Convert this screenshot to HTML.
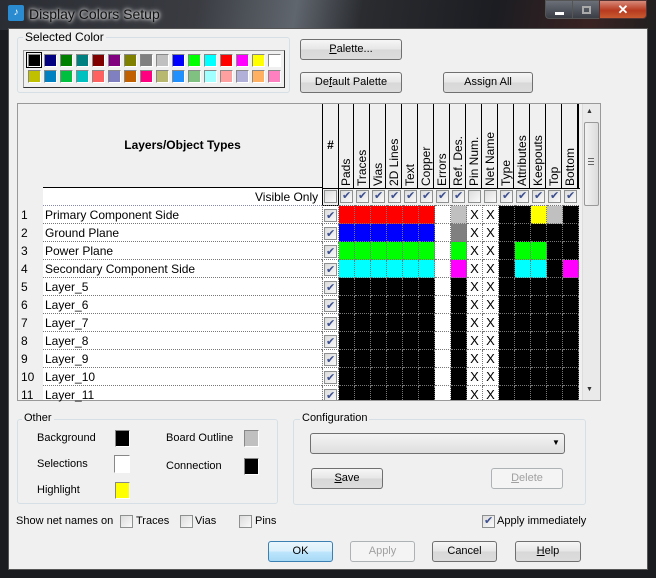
<!DOCTYPE html>
<html><head><meta charset="utf-8"><style>
*{box-sizing:border-box;margin:0;padding:0}
body{width:656px;height:578px;overflow:hidden;background:#1a1c20;font-family:"Liberation Sans",sans-serif;font-size:12px;color:#000;position:relative}
.a{position:absolute}
#tb{left:0;top:0;width:656px;height:30px;background:linear-gradient(100deg,#2a2d33 0%,#3a3c42 30%,#60666e 45%,#2a2c30 55%,#1b1d22 75%,#3a2222 90%,#202020 100%)}
#client{left:8px;top:28px;width:640px;height:542px;background:#f0f0f0;border:1px solid #555}
.btn{position:absolute;height:21px;border:1px solid #707070;border-radius:3px;background:linear-gradient(#f6f6f6,#e6e6e6 50%,#d8d8d8 51%,#dcdcdc);text-align:center;line-height:19px;font-size:11px}
.grp{position:absolute;border:1px solid #d5dfe5;border-radius:3px}
.lg{position:absolute;background:#f0f0f0;padding:0 2px;font-size:11px}
.sw{position:absolute;width:13px;height:13px;border:1px solid #888;border-right-color:#fff;border-bottom-color:#fff}
.cb{position:absolute;width:13px;height:13px;border:1px solid #8e8f8f;background:linear-gradient(135deg,#dcdcdc,#fafafa);}
.ck::after{content:"✔";position:absolute;left:1px;top:-2px;font-size:11px;color:#3c4f8e}
table{border-collapse:collapse;position:absolute}
td{border:1px dotted #777;width:16px;height:18px;padding:0;text-align:center;font-size:13px;line-height:16px}
.r{background:#f00}.b{background:#00f}.g{background:#0f0}.c{background:#0ff}.m{background:#f0f}.k{background:#000}.w{background:#fff}.y{background:#ff0}.s{background:#c0c0c0}.d{background:#808080}.x{background:#fff}
.vh{position:absolute;top:104px;width:16px;height:84px;border-left:1px solid #000;writing-mode:vertical-rl;transform:rotate(180deg);font-size:12px;padding-top:2px;line-height:16px}
.lab{position:absolute;left:45px;font-size:12px}
.num{position:absolute;left:21px;font-size:12px}
.sm{font-size:11px}
</style></head><body>
<div id="tb" class="a"></div>
<div class="a" style="left:8px;top:5px;width:16px;height:16px;background:#2a8bd0;border-radius:2px;color:#fff;font-size:10px;line-height:16px;text-align:center">♪</div>
<div class="a" style="left:29px;top:6px;color:#111;font-size:14px;text-shadow:0 0 6px #fff,0 0 3px #fff">Display Colors Setup</div>
<div class="a" style="left:545px;top:0;width:28px;height:19px;border:1px solid #555;border-radius:0 0 0 4px;background:linear-gradient(#6a6f78,#3a3d44)"><div class="a" style="left:9px;top:11px;width:9px;height:3px;background:#fff"></div></div>
<div class="a" style="left:572px;top:0;width:28px;height:19px;border:1px solid #555;background:linear-gradient(#6a6f78,#3a3d44)"><div class="a" style="left:9px;top:5px;width:9px;height:8px;border:2px solid #aaa"></div></div>
<div class="a" style="left:599px;top:0;width:48px;height:19px;border:1px solid #533;border-radius:0 0 4px 0;background:linear-gradient(#d88a7a,#b83a20 55%,#c85a30);color:#fff;text-align:center;font-weight:bold;font-size:13px;line-height:18px">✕</div>

<div id="client" class="a"></div>

<div class="grp" style="left:17px;top:37px;width:273px;height:56px"></div>
<div class="lg" style="left:23px;top:30px;font-size:12px">Selected Color</div>
<div class="a" style="left:23px;top:50px;width:262px;height:38px;border:1px solid #999;border-right-color:#333;border-bottom-color:#333;background:#f0f0f0"></div>
<div class="a" style="left:26px;top:52px;width:16px;height:16px;border:1px solid #000"></div>
<div class="sw" style="left:28px;top:54px;background:#000"></div><div class="sw" style="left:44px;top:54px;background:#000080"></div><div class="sw" style="left:60px;top:54px;background:#008000"></div><div class="sw" style="left:76px;top:54px;background:#008080"></div><div class="sw" style="left:92px;top:54px;background:#800000"></div><div class="sw" style="left:108px;top:54px;background:#800080"></div><div class="sw" style="left:124px;top:54px;background:#808000"></div><div class="sw" style="left:140px;top:54px;background:#808080"></div><div class="sw" style="left:156px;top:54px;background:#c0c0c0"></div><div class="sw" style="left:172px;top:54px;background:#0000ff"></div><div class="sw" style="left:188px;top:54px;background:#00ff00"></div><div class="sw" style="left:204px;top:54px;background:#00ffff"></div><div class="sw" style="left:220px;top:54px;background:#ff0000"></div><div class="sw" style="left:236px;top:54px;background:#ff00ff"></div><div class="sw" style="left:252px;top:54px;background:#ffff00"></div><div class="sw" style="left:268px;top:54px;background:#ffffff"></div>
<div class="sw" style="left:28px;top:70px;background:#c0c000"></div><div class="sw" style="left:44px;top:70px;background:#0080c0"></div><div class="sw" style="left:60px;top:70px;background:#00c040"></div><div class="sw" style="left:76px;top:70px;background:#00c0c0"></div><div class="sw" style="left:92px;top:70px;background:#ff6060"></div><div class="sw" style="left:108px;top:70px;background:#8080c0"></div><div class="sw" style="left:124px;top:70px;background:#c06000"></div><div class="sw" style="left:140px;top:70px;background:#ff0080"></div><div class="sw" style="left:156px;top:70px;background:#b8b870"></div><div class="sw" style="left:172px;top:70px;background:#2090ff"></div><div class="sw" style="left:188px;top:70px;background:#80c080"></div><div class="sw" style="left:204px;top:70px;background:#a0ffff"></div><div class="sw" style="left:220px;top:70px;background:#ffa0a0"></div><div class="sw" style="left:236px;top:70px;background:#b0b0d8"></div><div class="sw" style="left:252px;top:70px;background:#ffb060"></div><div class="sw" style="left:268px;top:70px;background:#ff80c0"></div>

<div class="btn" style="left:300px;top:39px;width:102px"><u>P</u>alette...</div>
<div class="btn" style="left:300px;top:72px;width:102px">De<u>f</u>ault Palette</div>
<div class="btn" style="left:443px;top:72px;width:90px">Assign All</div>

<div class="a" style="left:17px;top:103px;width:584px;height:298px;border:1px solid #999;background:#f0f0f0"></div>
<div class="a" style="left:43px;top:104px;width:279px;height:84px;border-bottom:1px solid #000"></div>
<div class="a" style="left:43px;top:138px;width:279px;text-align:center;font-weight:bold">Layers/Object Types</div>
<div class="a" style="left:43px;top:188px;width:279px;height:212px;background:#fff"></div>
<div class="a" style="left:322px;top:104px;width:17px;height:102px;border-left:1px solid #000;border-right:1px solid #000"></div>
<div class="a" style="left:322px;top:138px;width:17px;text-align:center;font-weight:bold">#</div>
<div class="a" style="left:338px;top:188px;width:242px;height:1px;background:#000"></div>
<div class="a" style="left:43px;top:205px;width:279px;border-top:1px dotted #88a"></div>
<div class="a" style="left:255px;top:190px">Visible Only</div>
<div class="a" style="left:322px;top:188px;width:17px;height:18px;border:1px solid #000"></div>
<div class="cb" style="left:324px;top:190px"></div>

<div class="vh" style="left:338px">Pads</div><div class="vh" style="left:354px">Traces</div><div class="vh" style="left:370px">Vias</div><div class="vh" style="left:386px">2D Lines</div><div class="vh" style="left:402px">Text</div><div class="vh" style="left:418px">Copper</div><div class="vh" style="left:434px">Errors</div><div class="vh" style="left:450px">Ref. Des.</div><div class="vh" style="left:466px">Pin Num.</div><div class="vh" style="left:482px">Net Name</div><div class="vh" style="left:498px">Type</div><div class="vh" style="left:514px">Attributes</div><div class="vh" style="left:530px">Keepouts</div><div class="vh" style="left:546px">Top</div><div class="vh" style="left:562px">Bottom</div>
<div class="a" style="left:578px;top:104px;width:1px;height:84px;background:#000"></div>

<div class="cb ck" style="left:340px;top:190px"></div><div class="cb ck" style="left:356px;top:190px"></div><div class="cb ck" style="left:372px;top:190px"></div><div class="cb ck" style="left:388px;top:190px"></div><div class="cb ck" style="left:404px;top:190px"></div><div class="cb ck" style="left:420px;top:190px"></div><div class="cb ck" style="left:436px;top:190px"></div><div class="cb ck" style="left:452px;top:190px"></div><div class="cb" style="left:468px;top:190px"></div><div class="cb" style="left:484px;top:190px"></div><div class="cb ck" style="left:500px;top:190px"></div><div class="cb ck" style="left:516px;top:190px"></div><div class="cb ck" style="left:532px;top:190px"></div><div class="cb ck" style="left:548px;top:190px"></div><div class="cb ck" style="left:564px;top:190px"></div>

<div class="num" style="top:208px">1</div><div class="lab" style="top:208px">Primary Component Side</div>
<div class="num" style="top:226px">2</div><div class="lab" style="top:226px">Ground Plane</div>
<div class="num" style="top:244px">3</div><div class="lab" style="top:244px">Power Plane</div>
<div class="num" style="top:262px">4</div><div class="lab" style="top:262px">Secondary Component Side</div>
<div class="num" style="top:280px">5</div><div class="lab" style="top:280px">Layer_5</div>
<div class="num" style="top:298px">6</div><div class="lab" style="top:298px">Layer_6</div>
<div class="num" style="top:316px">7</div><div class="lab" style="top:316px">Layer_7</div>
<div class="num" style="top:334px">8</div><div class="lab" style="top:334px">Layer_8</div>
<div class="num" style="top:352px">9</div><div class="lab" style="top:352px">Layer_9</div>
<div class="num" style="top:370px">10</div><div class="lab" style="top:370px">Layer_10</div>
<div class="num" style="top:388px">11</div><div class="lab" style="top:388px">Layer_11</div>
<div class="a" style="left:43px;top:223px;width:279px;border-top:1px dotted #777"></div>
<div class="a" style="left:43px;top:241px;width:279px;border-top:1px dotted #777"></div>
<div class="a" style="left:43px;top:259px;width:279px;border-top:1px dotted #777"></div>
<div class="a" style="left:43px;top:277px;width:279px;border-top:1px dotted #777"></div>
<div class="a" style="left:43px;top:295px;width:279px;border-top:1px dotted #777"></div>
<div class="a" style="left:43px;top:313px;width:279px;border-top:1px dotted #777"></div>
<div class="a" style="left:43px;top:331px;width:279px;border-top:1px dotted #777"></div>
<div class="a" style="left:43px;top:349px;width:279px;border-top:1px dotted #777"></div>
<div class="a" style="left:43px;top:367px;width:279px;border-top:1px dotted #777"></div>
<div class="a" style="left:43px;top:385px;width:279px;border-top:1px dotted #777"></div>

<div class="a" style="left:322px;top:205px;width:258px;height:195px;overflow:hidden">
<table style="left:0;top:0">
<tr><td class="w"><div class="cb ck" style="position:relative;margin:1px auto 0"></div></td><td class="r"></td><td class="r"></td><td class="r"></td><td class="r"></td><td class="r"></td><td class="r"></td><td class="w"></td><td class="s"></td><td class="x">X</td><td class="x">X</td><td class="k"></td><td class="k"></td><td class="y"></td><td class="s"></td><td class="k"></td></tr>
<tr><td class="w"><div class="cb ck" style="position:relative;margin:1px auto 0"></div></td><td class="b"></td><td class="b"></td><td class="b"></td><td class="b"></td><td class="b"></td><td class="b"></td><td class="w"></td><td class="d"></td><td class="x">X</td><td class="x">X</td><td class="k"></td><td class="k"></td><td class="k"></td><td class="k"></td><td class="k"></td></tr>
<tr><td class="w"><div class="cb ck" style="position:relative;margin:1px auto 0"></div></td><td class="g"></td><td class="g"></td><td class="g"></td><td class="g"></td><td class="g"></td><td class="g"></td><td class="w"></td><td class="g"></td><td class="x">X</td><td class="x">X</td><td class="k"></td><td class="g"></td><td class="g"></td><td class="k"></td><td class="k"></td></tr>
<tr><td class="w"><div class="cb ck" style="position:relative;margin:1px auto 0"></div></td><td class="c"></td><td class="c"></td><td class="c"></td><td class="c"></td><td class="c"></td><td class="c"></td><td class="w"></td><td class="m"></td><td class="x">X</td><td class="x">X</td><td class="k"></td><td class="c"></td><td class="c"></td><td class="k"></td><td class="m"></td></tr>
<tr><td class="w"><div class="cb ck" style="position:relative;margin:1px auto 0"></div></td><td class="k"></td><td class="k"></td><td class="k"></td><td class="k"></td><td class="k"></td><td class="k"></td><td class="w"></td><td class="k"></td><td class="x">X</td><td class="x">X</td><td class="k"></td><td class="k"></td><td class="k"></td><td class="k"></td><td class="k"></td></tr>
<tr><td class="w"><div class="cb ck" style="position:relative;margin:1px auto 0"></div></td><td class="k"></td><td class="k"></td><td class="k"></td><td class="k"></td><td class="k"></td><td class="k"></td><td class="w"></td><td class="k"></td><td class="x">X</td><td class="x">X</td><td class="k"></td><td class="k"></td><td class="k"></td><td class="k"></td><td class="k"></td></tr>
<tr><td class="w"><div class="cb ck" style="position:relative;margin:1px auto 0"></div></td><td class="k"></td><td class="k"></td><td class="k"></td><td class="k"></td><td class="k"></td><td class="k"></td><td class="w"></td><td class="k"></td><td class="x">X</td><td class="x">X</td><td class="k"></td><td class="k"></td><td class="k"></td><td class="k"></td><td class="k"></td></tr>
<tr><td class="w"><div class="cb ck" style="position:relative;margin:1px auto 0"></div></td><td class="k"></td><td class="k"></td><td class="k"></td><td class="k"></td><td class="k"></td><td class="k"></td><td class="w"></td><td class="k"></td><td class="x">X</td><td class="x">X</td><td class="k"></td><td class="k"></td><td class="k"></td><td class="k"></td><td class="k"></td></tr>
<tr><td class="w"><div class="cb ck" style="position:relative;margin:1px auto 0"></div></td><td class="k"></td><td class="k"></td><td class="k"></td><td class="k"></td><td class="k"></td><td class="k"></td><td class="w"></td><td class="k"></td><td class="x">X</td><td class="x">X</td><td class="k"></td><td class="k"></td><td class="k"></td><td class="k"></td><td class="k"></td></tr>
<tr><td class="w"><div class="cb ck" style="position:relative;margin:1px auto 0"></div></td><td class="k"></td><td class="k"></td><td class="k"></td><td class="k"></td><td class="k"></td><td class="k"></td><td class="w"></td><td class="k"></td><td class="x">X</td><td class="x">X</td><td class="k"></td><td class="k"></td><td class="k"></td><td class="k"></td><td class="k"></td></tr>
<tr><td class="w"><div class="cb ck" style="position:relative;margin:1px auto 0"></div></td><td class="k"></td><td class="k"></td><td class="k"></td><td class="k"></td><td class="k"></td><td class="k"></td><td class="w"></td><td class="k"></td><td class="x">X</td><td class="x">X</td><td class="k"></td><td class="k"></td><td class="k"></td><td class="k"></td><td class="k"></td></tr>
</table></div>

<div class="a" style="left:582px;top:104px;width:18px;height:296px;background:#eaeaea;border-left:1px solid #ddd"></div>
<div class="a" style="left:586px;top:108px;font-size:7px;color:#333">▲</div>
<div class="a" style="left:584px;top:122px;width:15px;height:84px;border:1px solid #999;border-radius:2px;background:linear-gradient(90deg,#f2f2f2,#dcdcdc)"></div>
<div class="a" style="left:588px;top:158px;width:6px;height:7px;border-top:1px solid #666;border-bottom:1px solid #666"><div style="margin-top:2px;height:1px;background:#666"></div></div>
<div class="a" style="left:586px;top:386px;font-size:7px;color:#333">▼</div>

<div class="grp" style="left:17px;top:419px;width:261px;height:85px"></div>
<div class="lg" style="left:22px;top:412px">Other</div>
<div class="a sm" style="left:37px;top:432px">Background</div>
<div class="sw" style="left:115px;top:430px;width:15px;height:17px;background:#000"></div>
<div class="a sm" style="left:37px;top:458px">Selections</div>
<div class="sw" style="left:114px;top:455px;width:16px;height:18px;background:#fff"></div>
<div class="a sm" style="left:37px;top:484px">Highlight</div>
<div class="sw" style="left:115px;top:482px;width:15px;height:17px;background:#ff0"></div>
<div class="a sm" style="left:166px;top:432px">Board Outline</div>
<div class="sw" style="left:244px;top:430px;width:15px;height:17px;background:#c0c0c0"></div>
<div class="a sm" style="left:166px;top:460px">Connection</div>
<div class="sw" style="left:244px;top:458px;width:15px;height:17px;background:#000"></div>

<div class="grp" style="left:293px;top:419px;width:293px;height:86px"></div>
<div class="lg" style="left:300px;top:412px">Configuration</div>
<div class="a" style="left:310px;top:433px;width:255px;height:21px;border:1px solid #707070;border-radius:3px;background:linear-gradient(#f4f4f4,#dedede)"></div>
<div class="a" style="left:552px;top:438px;font-size:8px">▼</div>
<div class="btn" style="left:311px;top:468px;width:72px"><u>S</u>ave</div>
<div class="btn" style="left:491px;top:468px;width:72px;border-color:#adb2b5;background:#f4f4f4;color:#a0a0a0"><u>D</u>elete</div>

<div class="a sm" style="left:16px;top:515px">Show net names on</div>
<div class="cb" style="left:120px;top:515px"></div><div class="a sm" style="left:136px;top:515px">Traces</div>
<div class="cb" style="left:180px;top:515px"></div><div class="a sm" style="left:195px;top:515px">Vias</div>
<div class="cb" style="left:239px;top:515px"></div><div class="a sm" style="left:255px;top:515px">Pins</div>
<div class="cb ck" style="left:482px;top:515px"></div><div class="a sm" style="left:497px;top:515px">Apply immediately</div>

<div class="btn" style="left:268px;top:541px;width:65px;border-color:#3c7fb1;background:linear-gradient(#eaf6fd,#d9f0fc 50%,#bee6fd 51%,#a7d9f5)">OK</div>
<div class="btn" style="left:350px;top:541px;width:65px;border-color:#adb2b5;background:#f4f4f4;color:#a0a0a0">Apply</div>
<div class="btn" style="left:432px;top:541px;width:65px">Cancel</div>
<div class="btn" style="left:515px;top:541px;width:66px"><u>H</u>elp</div>
</body></html>
